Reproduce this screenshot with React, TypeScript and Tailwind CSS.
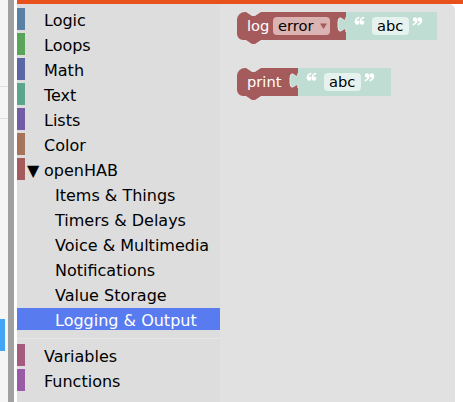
import React from "react";

type Category = {
  name: string;
  color?: string;
  expanded?: boolean;
  child?: boolean;
  selected?: boolean;
};

const topCategories: Category[] = [
  { name: "Logic", color: "#5b80a5" },
  { name: "Loops", color: "#5ba55b" },
  { name: "Math", color: "#5b67a5" },
  { name: "Text", color: "#5ba58c" },
  { name: "Lists", color: "#745ba5" },
  { name: "Color", color: "#a5745b" },
  { name: "openHAB", color: "#a55b5b", expanded: true },
  { name: "Items & Things", child: true },
  { name: "Timers & Delays", child: true },
  { name: "Voice & Multimedia", child: true },
  { name: "Notifications", child: true },
  { name: "Value Storage", child: true },
  { name: "Logging & Output", child: true, selected: true },
];

const bottomCategories: Category[] = [
  { name: "Variables", color: "#a55b80" },
  { name: "Functions", color: "#995ba5" },
];

function TreeRow({ cat }: { cat: Category }) {
  return (
    <div
      className={`flex h-[22px] mb-[3px] overflow-hidden leading-[22px] ${
        cat.selected ? "bg-[#587cf0] text-white" : "text-black"
      }`}
    >
      {cat.child ? (
        <span className="pl-[38px] pt-[2px]">{cat.name}</span>
      ) : (
        <>
          <div className="w-[8px] h-full shrink-0" style={{ backgroundColor: cat.color }} />
          <span className="w-[19px] pl-[2px] pt-[2px]">{cat.expanded ? "▼" : ""}</span>
          <span className="pt-[2px]">{cat.name}</span>
        </>
      )}
    </div>
  );
}

const RED = "#a55b5b";
const GREEN = "#c0ddd4";

// red statement block with top notch and bottom tab
function stmtPath(x: number, y: number, w: number, h: number) {
  const n = x + 9;
  return `M${x},${y + 8} a8,8 0 0 1 8,-8 H${n} l6,4 h3 l6,-4 H${x + w} V${y + h} H${n + 15} l-6,4 h-3 l-6,-4 H${x + 6} a6,6 0 0 1 -6,-6 Z`;
}

// value block with left puzzle tab
function valuePath(x: number, y: number, w: number, h: number) {
  return `M${x},${y} H${x + w} V${y + h} H${x} V${y + 20} c0,-10 -8,8 -8,-7.5 s8,2.5 8,-7.5 Z`;
}

// blockly quote image, drawn as two "6" marks
function Quote({ x, y, close }: { x: number; y: number; close?: boolean }) {
  const mark = (dx: number) => (
    <g transform={`translate(${dx},0)`}>
      <circle cx={2.2} cy={5.6} r={2.2} fill="#fff" />
      <path d="M0.5,5.4 Q0.4,1.6 3.8,0.6" fill="none" stroke="#fff" strokeWidth={1.6} strokeLinecap="round" />
    </g>
  );
  return (
    <g transform={`translate(${x},${y})${close ? " rotate(180 4.5 4)" : ""}`}>
      {mark(0)}
      {mark(4.8)}
    </g>
  );
}

function TextBlock({ x, y, w }: { x: number; y: number; w: number }) {
  return (
    <g>
      <path d={valuePath(x, y, w, 28)} fill={GREEN} />
      <path d={`M${x},${y + 5} c0,10 -8,-8 -8,7.5 s8,-2.5 8,7.5`} fill="none" stroke="#e6f2ee" strokeWidth="1" />
      <Quote x={x + 9} y={y + 5} />
      <rect x={x + 26} y={y + 5} width={37} height={18} rx={4} fill="#e6f2ee" />
      <text x={x + 31} y={y + 18.5} fill="#000">
        abc
      </text>
      <Quote x={x + 67} y={y + 5} close />
    </g>
  );
}

function Workspace() {
  return (
    <div className="relative w-[235px] h-full bg-[#e1e1e1] rounded-tr-[6px]">
      <svg className="absolute left-0 top-0" width="235" height="398" style={{ fontFamily: "'DejaVu Sans', sans-serif", fontSize: "14.667px" }}>
        <g transform="translate(-220,-4)">
          {/* log block */}
          <path d={stmtPath(237, 12, 109, 28)} fill={RED} />
          <text x={247} y={30.5} fill="#fff">
            log
          </text>
          <rect x={273} y={17} width={57} height={18} rx={4} fill="#dbb3b3" />
          <text x={278} y={30.5} fill="#000">
            error
          </text>
          <polygon points="320,23.5 327,23.5 323.5,29" fill={RED} />
          <TextBlock x={346} y={12} w={91} />

          {/* print block */}
          <path d={stmtPath(237, 68, 61, 28)} fill={RED} />
          <text x={247} y={86.5} fill="#fff">
            print
          </text>
          <TextBlock x={298} y={68} w={93} />
        </g>
      </svg>
    </div>
  );
}

export default function App() {
  return (
    <div className="w-[463px] h-[402px] flex overflow-hidden bg-white font-['DejaVu_Sans',sans-serif]">
      <div className="w-[8px] h-full bg-[#f5f5f5] flex flex-col">
        <div className="h-[86px]" />
        <div className="h-[1px] bg-[#dedede]" />
        <div className="h-[31px]" />
        <div className="h-[1px] bg-[#dedede]" />
        <div className="h-[200px]" />
        <div className="w-[5px] h-[32px] bg-[#42a5f5]" />
      </div>
      <div className="w-[6px] h-full bg-[#a0a0a0]" />
      <div className="w-[3px] h-full bg-white" />
      <div className="flex-1 flex flex-col">
        <div className="h-[4px] bg-[#e8501c]" />
        <div className="flex flex-1">
          <div className="w-[203px] h-full bg-[#dddddd] pt-[4px] text-[16px]">
            {topCategories.map((c) => (
              <TreeRow key={c.name} cat={c} />
            ))}
            <div className="py-[5px]">
              <div className="h-[1px] bg-[#e6e6e6]" />
            </div>
            {bottomCategories.map((c) => (
              <TreeRow key={c.name} cat={c} />
            ))}
          </div>
          <Workspace />
          <div className="w-[8px] h-full bg-white" />
        </div>
      </div>
    </div>
  );
}
